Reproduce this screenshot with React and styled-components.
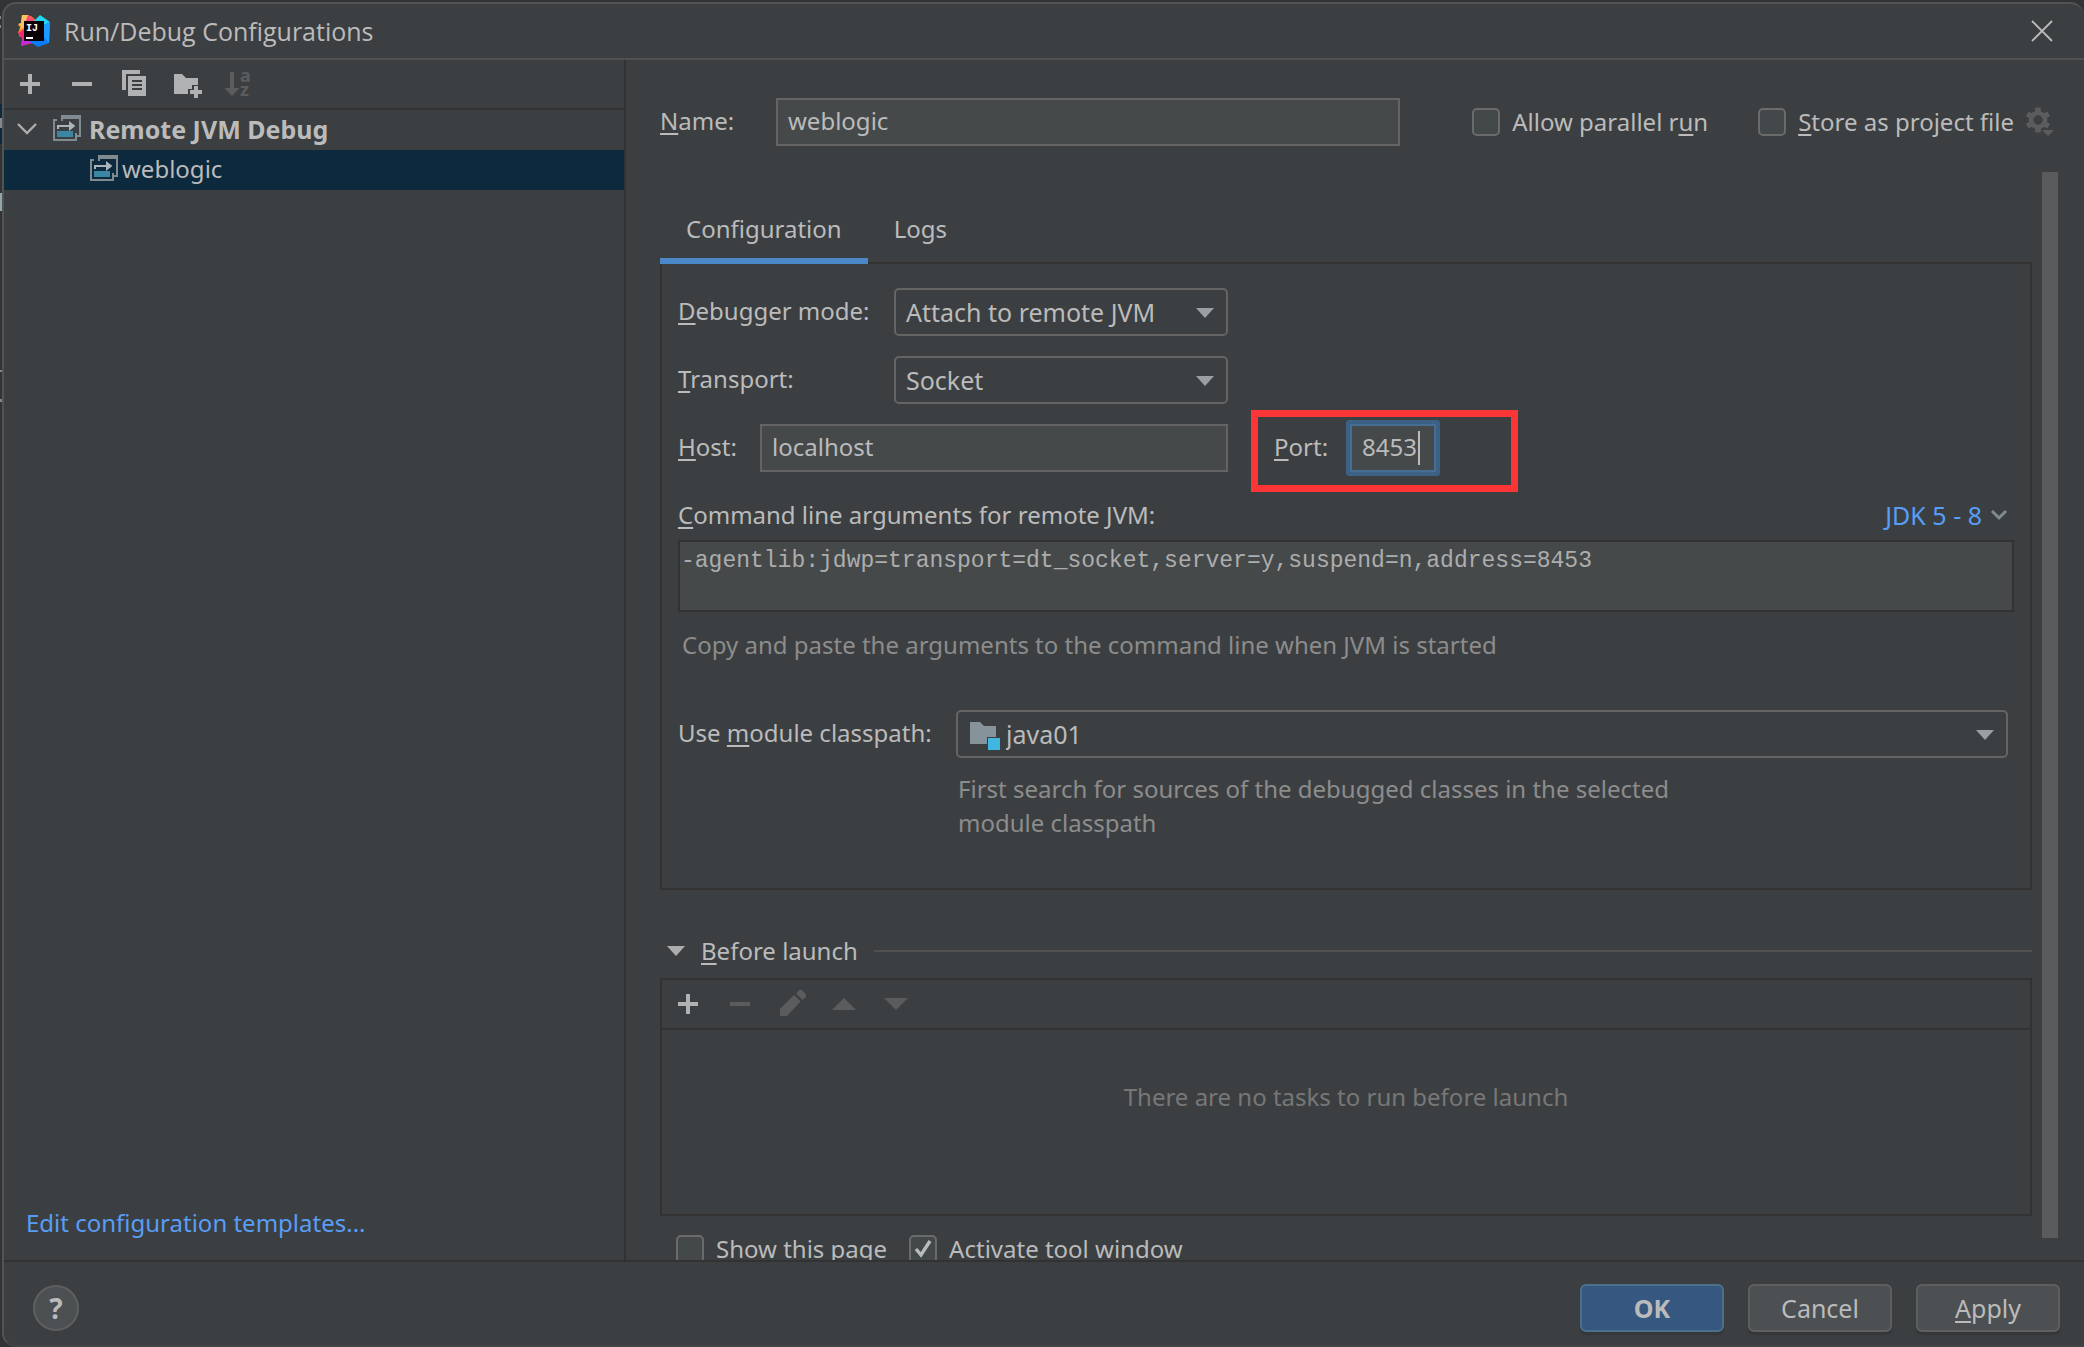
import { useState } from "react";
import styled, { createGlobalStyle, css } from "styled-components";

const GlobalStyle = createGlobalStyle`
  * {
    box-sizing: border-box;
  }
  body {
    margin: 0;
    background: #313335;
    color: #bbbbbb;
    font-family: "Noto Sans", "Open Sans", sans-serif;
    font-size: 24px;
    line-height: 34px;
  }
  button,
  input,
  select,
  textarea {
    margin: 0;
    color: inherit;
    font: inherit;
    outline: none;
  }
`;

const App = () => {
  const [tab, setTab] = useState("Configuration");

  return (
    <>
      <GlobalStyle />
      <Desktop>
        <EditorEdge />
        <Dialog>
          <TitleBar>
            <IdeaLogo />
            <Title>Run/Debug Configurations</Title>
            <IconButton aria-label="Close">
              <Icon>
                <path d="M3 3l10 10M13 3L3 13" stroke="#bbbbbb" strokeWidth="0.9" fill="none" />
              </Icon>
            </IconButton>
          </TitleBar>
          <Body>
            <Sidebar />
            <Main>
              <NameRow>
                <Label htmlFor="name" $width={116}>
                  <u>N</u>ame:
                </Label>
                <TextInput id="name" defaultValue="weblogic" $grow />
                <Options>
                  <Check>
                    Allow parallel r<u>u</u>n
                  </Check>
                  <StoreOption>
                    <Check>
                      <u>S</u>tore as project file
                    </Check>
                    <IconButton aria-label="Storage settings" disabled>
                      <GearIcon />
                    </IconButton>
                  </StoreOption>
                </Options>
              </NameRow>
              <Scroller>
                <Content>
                  <Tabs role="tablist">
                    {["Configuration", "Logs"].map((name) => (
                      <Tab
                        key={name}
                        role="tab"
                        aria-selected={tab === name}
                        $active={tab === name}
                        onClick={() => setTab(name)}
                      >
                        {name}
                      </Tab>
                    ))}
                  </Tabs>
                  <ConfigurationPanel />
                  <BeforeLaunch />
                </Content>
                <ScrollThumb />
              </Scroller>
            </Main>
          </Body>
          <Footer>
            <HelpButton aria-label="Help">?</HelpButton>
            <Buttons>
              <Button $primary>OK</Button>
              <Button>Cancel</Button>
              <Button>
                <span>
                  <u>A</u>pply
                </span>
              </Button>
            </Buttons>
          </Footer>
        </Dialog>
      </Desktop>
    </>
  );
};

const Sidebar = () => (
  <SidePanel>
    <Toolbar>
      <IconButton aria-label="Add">
        <PlusIcon />
      </IconButton>
      <IconButton aria-label="Remove">
        <MinusIcon />
      </IconButton>
      <IconButton aria-label="Copy">
        <Icon>
          <path d="M2 1h9v2H4v8H2z" />
          <path d="M5 4h9v10H5zM7 6v1h5V6zM7 8v1h5V8zM7 10v1h5v-1z" fillRule="evenodd" />
        </Icon>
      </IconButton>
      <IconButton aria-label="New folder">
        <Icon>
          <path d="M2 3h4l2 2h6v3.500h-3v2H9V13H2z" />
          <path d="M12 9h2v2h2v2h-2v2h-2v-2h-2v-2h2z" />
        </Icon>
      </IconButton>
      <IconButton aria-label="Sort" disabled>
        <Icon>
          <path d="M4 2h2v8h2.700L5 14l-3.700-4H4z" />
          <text x="9" y="7" fontSize="9" fontWeight="700">
            a
          </text>
          <text x="9" y="14" fontSize="9" fontWeight="700">
            z
          </text>
        </Icon>
      </IconButton>
    </Toolbar>
    <Tree role="tree">
      <TreeRow role="treeitem" aria-expanded="true" $bold>
        <svg width="20" height="12" viewBox="0 0 20 12">
          <path d="M1 1l9 9 9-9" fill="none" stroke="#adadad" strokeWidth="2.400" />
        </svg>
        <RemoteIcon />
        Remote JVM Debug
      </TreeRow>
      <TreeRow role="treeitem" aria-selected="true" $child>
        <RemoteIcon />
        weblogic
      </TreeRow>
    </Tree>
    <TemplatesLink href="#templates">Edit configuration templates...</TemplatesLink>
  </SidePanel>
);

const ConfigurationPanel = () => (
  <Panel>
    <Field>
      <Label htmlFor="mode" $width={216}>
        <u>D</u>ebugger mode:
      </Label>
      <Combo id="mode" options={["Attach to remote JVM", "Listen to remote JVM"]} />
    </Field>
    <Field>
      <Label htmlFor="transport" $width={216}>
        <u>T</u>ransport:
      </Label>
      <Combo id="transport" options={["Socket", "Shared memory"]} />
    </Field>
    <Field>
      <Label htmlFor="host" $width={82}>
        <u>H</u>ost:
      </Label>
      <TextInput id="host" defaultValue="localhost" />
      <PortGroup>
        <Label htmlFor="port" $width={76}>
          <u>P</u>ort:
        </Label>
        <PortBox>
          <PortInput id="port" defaultValue="8453" />
          <Caret />
        </PortBox>
        <Highlight />
      </PortGroup>
    </Field>
    <ArgumentsHeader>
      <label htmlFor="arguments">
        <u>C</u>ommand line arguments for remote JVM:
      </label>
      <JdkButton>
        JDK 5 - 8
        <svg width="18" height="12" viewBox="0 0 18 12">
          <path d="M2 2l7 7 7-7" fill="none" stroke="#7f8b91" strokeWidth="3" />
        </svg>
      </JdkButton>
    </ArgumentsHeader>
    <Arguments
      id="arguments"
      readOnly
      spellCheck={false}
      value="-agentlib:jdwp=transport=dt_socket,server=y,suspend=n,address=8453"
    />
    <ArgumentsHint>Copy and paste the arguments to the command line when JVM is started</ArgumentsHint>
    <ModuleRow>
      <Label htmlFor="module" $width={278}>
        Use <u>m</u>odule classpath:
      </Label>
      <Combo id="module" options={["java01"]} icon={<ModuleIcon />} />
    </ModuleRow>
    <ModuleHint>
      First search for sources of the debugged classes in the selected
      <br />
      module classpath
    </ModuleHint>
  </Panel>
);

const BeforeLaunch = () => (
  <>
    <SectionTitle>
      <svg width="18" height="10" viewBox="0 0 18 10">
        <path d="M0 0h18l-9 10z" fill="#adadad" />
      </svg>
      <span>
        <u>B</u>efore launch
      </span>
      <Rule />
    </SectionTitle>
    <TaskBox>
      <Toolbar>
        <IconButton aria-label="Add task">
          <PlusIcon />
        </IconButton>
        <IconButton aria-label="Remove task" disabled>
          <MinusIcon />
        </IconButton>
        <IconButton aria-label="Edit task" disabled>
          <Icon>
            <path d="M2 14v-3.500l7-7 3.300 3.300L5.500 14z" />
            <path d="M10 2.700L11.700 1h1.200L15 3.100v1.200l-1.700 1.700z" />
          </Icon>
        </IconButton>
        <IconButton aria-label="Move up" disabled>
          <Icon>
            <path d="M2 11h12L8 5z" />
          </Icon>
        </IconButton>
        <IconButton aria-label="Move down" disabled>
          <Icon>
            <path d="M2 5h12l-6 6z" />
          </Icon>
        </IconButton>
      </Toolbar>
      <Empty>There are no tasks to run before launch</Empty>
    </TaskBox>
    <LaunchOptions>
      <Check>Show this page</Check>
      <Check defaultChecked>Activate tool window</Check>
    </LaunchOptions>
  </>
);

const Check = ({ children, defaultChecked }) => (
  <CheckLabel>
    <CheckBox type="checkbox" defaultChecked={defaultChecked} />
    <CheckMark viewBox="0 0 28 28">
      <path d="M7 14l5 6 9-14" fill="none" stroke="#bbbbbb" strokeWidth="3.400" />
    </CheckMark>
    <span>{children}</span>
  </CheckLabel>
);

const Combo = ({ id, options, icon }) => (
  <ComboBox $wide={!!icon}>
    {icon}
    <Select id={id} $icon={!!icon}>
      {options.map((option) => (
        <option key={option}>{option}</option>
      ))}
    </Select>
    <ComboArrow viewBox="0 0 18 10">
      <path d="M0 0h18l-9 10z" fill="#9c9fa1" />
    </ComboArrow>
  </ComboBox>
);

/* icons, drawn on a 16 unit grid */

const Icon = styled.svg.attrs({ viewBox: "0 0 16 16" })`
  display: block;
  flex: none;
  width: 32px;
  height: 32px;
  fill: currentColor;
  overflow: visible;
`;

const PlusIcon = () => (
  <Icon>
    <path d="M7 3h2v4h4v2H9v4H7V9H3V7h4z" />
  </Icon>
);

const MinusIcon = () => (
  <Icon>
    <path d="M3 7h10v2H3z" />
  </Icon>
);

const RemoteIcon = () => (
  <Icon>
    <path d="M5 4V1h10v11h-2v-1h1V3H6v1z" fill="#7f8b91" />
    <path d="M1 3h2v1H2v9h10v-3h1v4H1z" fill="#7f8b91" />
    <path d="M3 6h6V4l3.200 2.500L9 9V7H4v1H3z" fill="#aab4b9" />
    <path d="M3 9h8v3H3z" fill="#3a86a3" />
  </Icon>
);

const GearIcon = () => (
  <Icon>
    <g transform="translate(7 7)">
      {[0, 60, 120].map((angle) => (
        <path key={angle} d="M-1.400-6.200h2.800v3.400h-2.800zM-1.400 2.800h2.800v3.400h-2.800z" transform={`rotate(${angle})`} />
      ))}
      <circle r="3.500" fill="none" stroke="currentColor" strokeWidth="2.300" />
    </g>
    <path d="M9 12h6l-3 3z" />
  </Icon>
);

const ModuleIcon = () => (
  <ComboIcon viewBox="0 0 16 16">
    <path d="M1 2h5l2 2h6v5.500H9.500V13H1z" fill="#87939a" />
    <path d="M10 10h6v6h-6z" fill="#40b6e0" />
  </ComboIcon>
);

const IdeaLogo = () => (
  <svg width="32" height="34" viewBox="0 0 32 34">
    <path d="M4 1l9 1 6 5-2 8-15 8L0 18l3-4-3-3 3-2z" fill="#fc801d" />
    <path d="M4 1l7 0-4 12-6 3 2-4-3-2 3-1z" fill="#fdc35c" />
    <path d="M10 1l7 5-4 5-6-2z" fill="#fe4a76" />
    <path d="M0 19l7-4 8 14-12 3 1-8z" fill="#f5257e" />
    <path d="M3 32l2-9 12 6-5 0z" fill="#c42be0" />
    <path d="M16 7l6-6 10 7-1 6-10 2z" fill="#21d7f5" />
    <path d="M32 8l-1 21-11 4-8-5 12-16z" fill="#087cfa" />
    <path d="M26 12l6-4-1 21-5-6z" fill="#1a9dff" />
    <path d="M6 7h20v20H6z" fill="#0b0206" />
    <path d="M8 23h7v2H8z" fill="#ffffff" />
    <text x="8" y="17" fontSize="10" fontWeight="700" fontFamily="Liberation Mono, monospace" fill="#ffffff">
      IJ
    </text>
  </svg>
);

/* slice of the editor that stays visible left of the dialog */
const EditorEdge = () => (
  <Edge viewBox="0 0 2 1347" preserveAspectRatio="xMinYMin slice">
    <path d="M0 102h2v40H0z" fill="#0d293e" />
    <path d="M0 191h2v18H0z" fill="#8fa7a5" />
    <path d="M0 14h1v3H0zM0 23h1v3H0zM0 368h2v2H0zM0 397h2v3H0zM0 116h2v10H0z" fill="#85898b" />
  </Edge>
);

const Desktop = styled.div`
  display: flex;
  min-height: 100vh;
  padding-top: 2px;
`;

const Edge = styled.svg`
  flex: none;
  width: 2px;
`;

const Dialog = styled.div`
  display: flex;
  flex: 1;
  flex-direction: column;
  min-width: 0;
  height: calc(100vh - 2px);
  overflow: hidden;
  background: #3c3f41;
  border: solid #515354;
  border-width: 2px 0 2px 2px;
  border-bottom-color: #414446;
  border-radius: 14px 14px 0 14px;
`;

const TitleBar = styled.header`
  display: flex;
  flex: none;
  align-items: center;
  gap: 14px;
  height: 56px;
  padding: 0 26px 0 14px;
  border-bottom: 2px solid #515151;
`;

const Title = styled.h1`
  flex: 1;
  margin: 0;
  font-family: "Open Sans", sans-serif;
  font-size: 25px;
  font-weight: 400;
`;

const Body = styled.div`
  display: flex;
  flex: 1;
  min-height: 0;
`;

const SidePanel = styled.aside`
  display: flex;
  flex: none;
  flex-direction: column;
  width: 622px;
  border-right: 2px solid #323232;
`;

const Toolbar = styled.div`
  display: flex;
  align-items: center;
  gap: 20px;
  height: 50px;
  padding: 0 10px;
  border-bottom: 2px solid #323232;
`;

const IconButton = styled.button`
  flex: none;
  padding: 0;
  color: #afb1b3;
  background: none;
  border: none;

  &:disabled {
    color: #5b5c5d;
  }
`;

const Tree = styled.div`
  flex: 1;
`;

const TreeRow = styled.div`
  display: flex;
  align-items: center;
  gap: 6px;
  height: 40px;
  padding: 0 0 2px 13px;

  ${({ $bold }) =>
    $bold &&
    css`
      font-size: 25px;
      font-weight: 700;
    `}

  > svg + svg {
    margin-left: 8px;
  }

  ${({ $child }) =>
    $child &&
    css`
      gap: 2px;
      padding-left: 84px;
      background: #0d293e;
    `}
`;

const TemplatesLink = styled.a`
  padding: 0 22px 20px;
  color: #589df6;
  text-decoration: none;
`;

const Main = styled.main`
  display: flex;
  flex: 1;
  flex-direction: column;
  min-width: 0;
  padding: 38px 26px 0 34px;

  u {
    text-decoration-thickness: 2px;
    text-underline-offset: 3px;
  }
`;

const NameRow = styled.div`
  display: flex;
  flex: none;
  align-items: center;
  height: 48px;
  padding-right: 2px;
`;

const Label = styled.label`
  flex: none;
  width: ${({ $width }) => $width}px;
  padding-bottom: 2px;
`;

const TextInput = styled.input`
  flex: ${({ $grow }) => ($grow ? "1" : "none")};
  width: 468px;
  min-width: 0;
  height: 48px;
  padding: 0 10px 4px;
  background: #45494a;
  border: 2px solid #646464;
`;

const Options = styled.div`
  display: flex;
  align-items: center;
  gap: 50px;
  margin-left: 72px;
`;

const StoreOption = styled.div`
  display: flex;
  align-items: center;
  gap: 10px;
`;

const CheckLabel = styled.label`
  position: relative;
  display: flex;
  align-items: center;
  gap: 12px;
  white-space: nowrap;
`;

const CheckBox = styled.input`
  flex: none;
  width: 28px;
  height: 28px;
  appearance: none;
  background: #43494a;
  border: 2px solid #6b6b6b;
  border-radius: 5px;
`;

const CheckMark = styled.svg`
  position: absolute;
  left: 0;
  width: 28px;
  height: 28px;
  visibility: hidden;
  pointer-events: none;

  ${CheckBox}:checked + & {
    visibility: visible;
  }
`;

const Scroller = styled.div`
  display: flex;
  flex: 1;
  gap: 10px;
  min-height: 0;
  margin-top: 26px;
`;

const Content = styled.div`
  flex: 1;
  min-width: 0;
  padding-top: 26px;
  overflow: hidden;
`;

const ScrollThumb = styled.div`
  flex: none;
  width: 16px;
  margin-bottom: 22px;
  background: #595b5d;
`;

/* lifted so the active underline covers the panel's top border */
const Tabs = styled.div`
  position: relative;
  z-index: 1;
  display: flex;
`;

const Tab = styled.button`
  height: 66px;
  padding: 2px 26px 0;
  background: none;
  border: none;
  border-bottom: 6px solid ${({ $active }) => ($active ? "#4a88c7" : "transparent")};
`;

const Panel = styled.section`
  display: flex;
  flex-direction: column;
  margin-top: -2px;
  padding: 24px 16px 48px;
  border: 2px solid #323232;
`;

const Field = styled.div`
  display: flex;
  align-items: center;
  height: 48px;
  margin-bottom: 20px;
`;

const ComboBox = styled.div`
  position: relative;
  flex: ${({ $wide }) => ($wide ? "1" : "none")};
  width: 334px;
`;

const Select = styled.select`
  display: block;
  width: 100%;
  height: 48px;
  padding: 0 44px 0 ${({ $icon }) => ($icon ? 48 : 10)}px;
  appearance: none;
  background: #3c3f41;
  border: 2px solid #646464;
  border-radius: 5px;
  font-size: 25px;
`;

const ComboArrow = styled.svg`
  position: absolute;
  top: 20px;
  right: 14px;
  width: 18px;
  height: 10px;
  pointer-events: none;
`;

const ComboIcon = styled.svg`
  position: absolute;
  top: 8px;
  left: 12px;
  width: 32px;
  height: 32px;
  pointer-events: none;
`;

const PortGroup = styled.div`
  position: relative;
  display: flex;
  align-items: center;
  margin-left: 46px;
`;

const PortBox = styled.div`
  display: flex;
  align-items: center;
  height: 48px;
  padding: 0 10px;
  background: #45494a;
  border: 2px solid #466d94;
  box-shadow: 0 0 0 4px #3d6185;
  border-radius: 1px;
`;

const PortInput = styled.input`
  width: 56px;
  padding: 0 0 2px;
  background: none;
  border: none;
`;

const Caret = styled.span`
  width: 2px;
  height: 34px;
  margin-right: 4px;
  background: #bbbbbb;
`;

const Highlight = styled.div`
  position: absolute;
  top: -14px;
  left: -23px;
  width: 267px;
  height: 82px;
  border: 7px solid #fc3636;
  pointer-events: none;
`;

const ArgumentsHeader = styled.div`
  display: flex;
  align-items: center;
  justify-content: space-between;
  height: 48px;
  padding-bottom: 2px;
`;

const JdkButton = styled.button`
  display: flex;
  align-items: center;
  gap: 8px;
  padding: 0 6px;
  color: #589df6;
  background: none;
  border: none;
  font-size: 25px;
`;

const Arguments = styled.textarea`
  display: block;
  width: 100%;
  height: 72px;
  padding: 2px 1px;
  overflow: hidden;
  resize: none;
  color: #adadad;
  background: #45494a;
  border: 2px solid #323232;
  font-family: "Liberation Mono", monospace;
  font-size: 23px;
`;

const ArgumentsHint = styled.p`
  margin: 16px 4px 48px;
  color: #8c8c8c;
`;

const ModuleRow = styled.div`
  display: flex;
  align-items: center;
  padding-right: 6px;
`;

const ModuleHint = styled.p`
  margin: 14px 0 0 280px;
  color: #8c8c8c;
`;

const SectionTitle = styled.div`
  display: flex;
  align-items: center;
  gap: 16px;
  margin: 44px 0 10px;
  padding-left: 7px;
`;

const Rule = styled.div`
  flex: 1;
  height: 2px;
  background: #515151;
`;

const TaskBox = styled.section`
  border: 2px solid #323232;
`;

const Empty = styled.p`
  height: 184px;
  margin: 0;
  padding-top: 50px;
  color: #777777;
  text-align: center;
`;

const LaunchOptions = styled.div`
  display: flex;
  gap: 22px;
  margin-top: 16px;
  padding-left: 16px;
`;

const Footer = styled.footer`
  display: flex;
  flex: none;
  align-items: center;
  justify-content: space-between;
  padding: 22px 24px 13px 29px;
  border-top: 2px solid #323232;
`;

const HelpButton = styled.button`
  width: 46px;
  height: 46px;
  padding: 0;
  background: #4c5052;
  border: 2px solid #5e6060;
  border-radius: 50%;
  font-size: 28px;
  font-weight: 700;
`;

const Buttons = styled.div`
  display: flex;
  gap: 24px;
`;

const Button = styled.button`
  width: 144px;
  height: 48px;
  padding: 0;
  background: ${({ $primary }) => ($primary ? "#365880" : "#4c5052")};
  border: 2px solid ${({ $primary }) => ($primary ? "#4c708c" : "#5e6060")};
  border-radius: 6px;
  box-shadow: 0 3px 1px #35383a;
  font-size: 25px;
  font-weight: ${({ $primary }) => ($primary ? 700 : 400)};

  u {
    text-decoration-thickness: 2px;
    text-underline-offset: 3px;
  }
`;

export default App;
